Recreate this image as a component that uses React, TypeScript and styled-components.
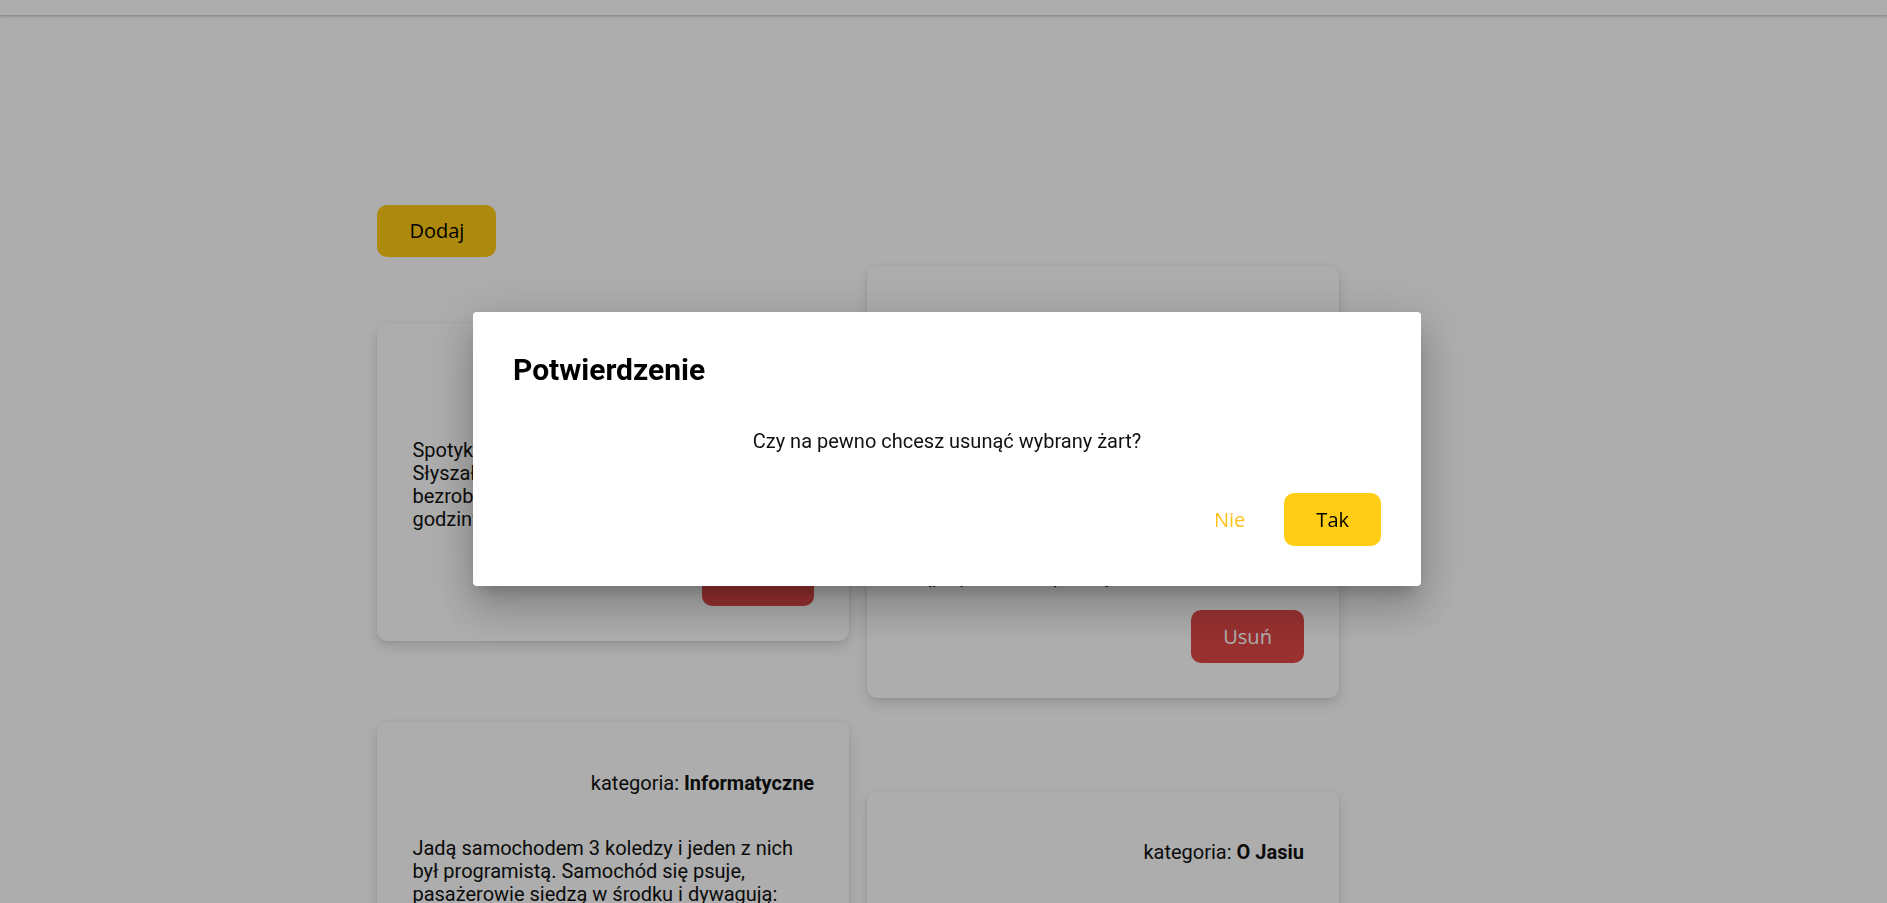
import React from "react";
import styled, { createGlobalStyle } from "styled-components";

const GlobalStyle = createGlobalStyle`
  html, body {
    margin: 0;
    padding: 0;
    background: #ffffff;
    font-family: Roboto, "Liberation Sans", Arial, sans-serif;
    color: #111111;
  }
  * { box-sizing: border-box; }
`;

const Header = styled.header`
  height: 15px;
  background: #ffffff;
  box-shadow: 0 1px 3px rgba(0, 0, 0, 0.28);
`;

const Main = styled.main`
  width: 60%;
  margin: 0 auto;
  padding-top: 190px;
  padding-bottom: 60px;
`;

const BaseButton = styled.button`
  height: 53px;
  padding: 0 32px;
  border: none;
  border-radius: 10px;
  font-family: "Open Sans", "Liberation Sans", sans-serif;
  font-size: 20px;
  font-weight: 500;
  line-height: 1;
  cursor: pointer;
`;

const PrimaryButton = styled(BaseButton)`
  background: #ffcc16;
  color: #000000;
`;

const AddButton = styled(PrimaryButton)`
  height: 52px;
  margin-bottom: 9px;
`;

const DangerButton = styled(BaseButton)`
  background: #e04848;
  color: #ffffff;
`;

const TextButton = styled(BaseButton)`
  background: transparent;
  color: #ffc21c;
`;

const CardGrid = styled.section`
  display: flex;
  flex-wrap: wrap;
  align-items: center;
  column-gap: 18px;
  row-gap: 24px;
`;

const Card = styled.article`
  width: 25vw;
  padding: 35px;
  border-radius: 10px;
  background: #ffffff;
  box-shadow: 0 6px 14px rgba(0, 0, 0, 0.13), 0 1px 4px rgba(0, 0, 0, 0.06);
`;

const Category = styled.div`
  margin-top: 15px;
  text-align: right;
  font-size: 20px;
  line-height: 23px;

  b {
    font-weight: 700;
  }
`;

const JokeText = styled.p`
  margin: 42px 0 0;
  font-size: 20px;
  line-height: 23px;
  white-space: pre-line;
`;

const CardActions = styled.div`
  display: flex;
  justify-content: flex-end;
  margin-top: 22px;
`;

const Backdrop = styled.div`
  position: fixed;
  inset: 0;
  background: rgba(0, 0, 0, 0.32);
  display: flex;
  align-items: center;
  justify-content: center;
`;

const Dialog = styled.div`
  width: 948px;
  margin: 0 0 5px 7px;
  padding: 40px;
  background: #ffffff;
  border-radius: 4px;
  box-shadow: 0 11px 15px -7px rgba(0, 0, 0, 0.2),
    0 24px 38px 3px rgba(0, 0, 0, 0.14), 0 9px 46px 8px rgba(0, 0, 0, 0.12);
`;

const DialogTitle = styled.h2`
  margin: 0;
  font-size: 30px;
  font-weight: 700;
  line-height: normal;
  color: #000000;
`;

const DialogMessage = styled.p`
  margin: 42px 0 0;
  text-align: center;
  font-size: 20px;
  line-height: normal;
`;

const DialogActions = styled.div`
  display: flex;
  justify-content: flex-end;
  gap: 7px;
  margin-top: 40px;
`;

type Joke = { category: string; text: string };

const jokes: Joke[] = [
  {
    category: "Różne",
    text: `Spotykają się dwaj znajomi po latach.
Słyszałem, że zostałeś
bezrobotnym? - Tak, ale pracuję 24
godziny na dobę - szukam pracy.`,
  },
  {
    category: "Inne",
    text: `Przychodzi facet do lekarza i mówi:
- Panie doktorze, wszyscy mnie
ignorują. - Następny proszę!
Wraca po tygodniu i znowu mówi:
- Panie doktorze, nadal mnie nikt
nie słucha. Lekarz podnosi wzrok
znad papierów i pyta spokojnie:
- A pan to w jakiej sprawie?
to (po prostu taki), który znowu,`,
  },
  {
    category: "Informatyczne",
    text: `Jadą samochodem 3 koledzy i jeden z nich
był programistą. Samochód się psuje,
pasażerowie siedzą w środku i dywagują:
Mechanik: - Pewnie coś z silnikiem,
trzeba otworzyć maskę i sprawdzić.
Elektryk: - Na pewno to akumulator,
trzeba zmierzyć napięcie.
Programista: - A może wszyscy
wysiądźmy, zamknijmy drzwi, potem
wsiądźmy z powrotem i spróbujmy
jeszcze raz?`,
  },
  {
    category: "O Jasiu",
    text: `Pani pyta Jasia:
- Jasiu, ile to jest dwa plus dwa?
- Cztery, proszę pani.
- Bardzo dobrze!
- Dobrze? Przecież idealnie!`,
  },
];

export default function App() {
  return (
    <>
      <GlobalStyle />
      <Header />
      <Main>
        <AddButton>Dodaj</AddButton>
        <CardGrid>
          {jokes.map((joke, i) => (
            <Card key={i}>
              <Category>
                kategoria: <b>{joke.category}</b>
              </Category>
              <JokeText>{joke.text}</JokeText>
              <CardActions>
                <DangerButton>Usuń</DangerButton>
              </CardActions>
            </Card>
          ))}
        </CardGrid>
      </Main>
      <Backdrop>
        <Dialog role="dialog">
          <DialogTitle>Potwierdzenie</DialogTitle>
          <DialogMessage>Czy na pewno chcesz usunąć wybrany żart?</DialogMessage>
          <DialogActions>
            <TextButton>Nie</TextButton>
            <PrimaryButton>Tak</PrimaryButton>
          </DialogActions>
        </Dialog>
      </Backdrop>
    </>
  );
}
